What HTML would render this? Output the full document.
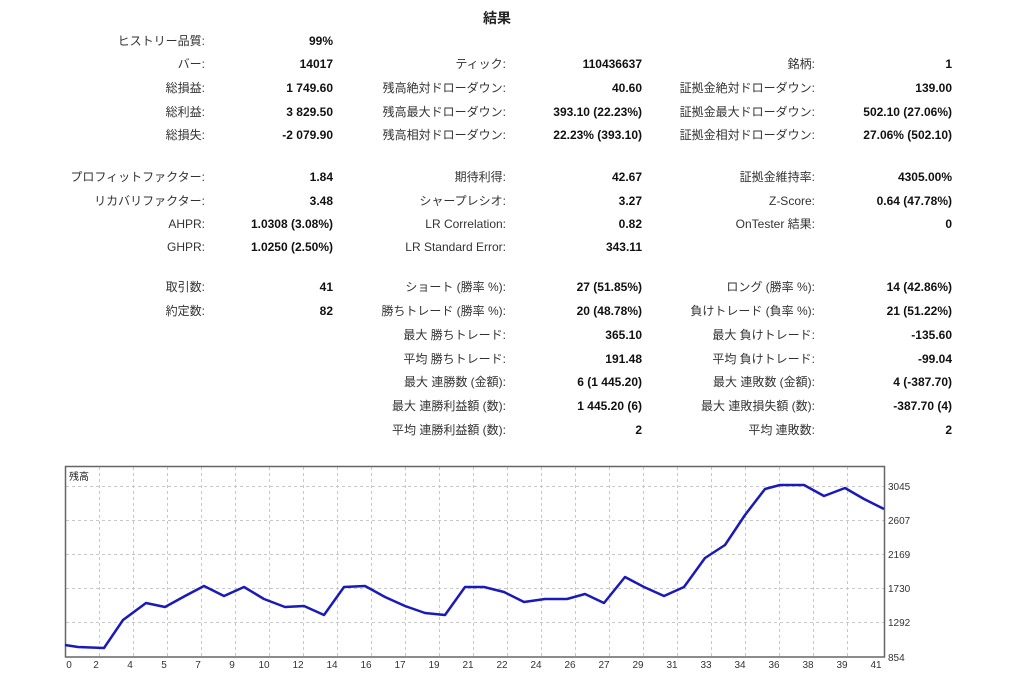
<!DOCTYPE html>
<html><head><meta charset="utf-8"><style>
body{margin:0;width:1024px;height:690px;background:#fff;position:relative;font-family:"Liberation Sans","Noto Sans CJK JP",sans-serif;font-size:12px;color:#222;overflow:hidden}
.l,.v{position:absolute;white-space:nowrap;line-height:14px;text-align:right}
.l{color:#333}
.v{font-weight:bold;color:#111}
.t{position:absolute;left:0;width:994px;text-align:center;top:8px;font-weight:bold;font-size:14px}
</style></head><body>
<div class="t">結果</div>
<!-- col1 labels right 205, values right 333 -->
<div class="l" style="right:819px;top:34px">ヒストリー品質:</div><div class="v" style="right:691px;top:34px">99%</div>
<div class="l" style="right:819px;top:57px">バー:</div><div class="v" style="right:691px;top:57px">14017</div>
<div class="l" style="right:819px;top:81px">総損益:</div><div class="v" style="right:691px;top:81px">1 749.60</div>
<div class="l" style="right:819px;top:105px">総利益:</div><div class="v" style="right:691px;top:105px">3 829.50</div>
<div class="l" style="right:819px;top:128px">総損失:</div><div class="v" style="right:691px;top:128px">-2 079.90</div>
<div class="l" style="right:819px;top:170px">プロフィットファクター:</div><div class="v" style="right:691px;top:170px">1.84</div>
<div class="l" style="right:819px;top:194px">リカバリファクター:</div><div class="v" style="right:691px;top:194px">3.48</div>
<div class="l" style="right:819px;top:217px">AHPR:</div><div class="v" style="right:691px;top:217px">1.0308 (3.08%)</div>
<div class="l" style="right:819px;top:240px">GHPR:</div><div class="v" style="right:691px;top:240px">1.0250 (2.50%)</div>
<div class="l" style="right:819px;top:280px">取引数:</div><div class="v" style="right:691px;top:280px">41</div>
<div class="l" style="right:819px;top:304px">約定数:</div><div class="v" style="right:691px;top:304px">82</div>
<!-- col2 labels right 506, values right 642 -->
<div class="l" style="right:518px;top:57px">ティック:</div><div class="v" style="right:382px;top:57px">110436637</div>
<div class="l" style="right:518px;top:81px">残高絶対ドローダウン:</div><div class="v" style="right:382px;top:81px">40.60</div>
<div class="l" style="right:518px;top:105px">残高最大ドローダウン:</div><div class="v" style="right:382px;top:105px">393.10 (22.23%)</div>
<div class="l" style="right:518px;top:128px">残高相対ドローダウン:</div><div class="v" style="right:382px;top:128px">22.23% (393.10)</div>
<div class="l" style="right:518px;top:170px">期待利得:</div><div class="v" style="right:382px;top:170px">42.67</div>
<div class="l" style="right:518px;top:194px">シャープレシオ:</div><div class="v" style="right:382px;top:194px">3.27</div>
<div class="l" style="right:518px;top:217px">LR Correlation:</div><div class="v" style="right:382px;top:217px">0.82</div>
<div class="l" style="right:518px;top:240px">LR Standard Error:</div><div class="v" style="right:382px;top:240px">343.11</div>
<div class="l" style="right:518px;top:280px">ショート (勝率 %):</div><div class="v" style="right:382px;top:280px">27 (51.85%)</div>
<div class="l" style="right:518px;top:304px">勝ちトレード (勝率 %):</div><div class="v" style="right:382px;top:304px">20 (48.78%)</div>
<div class="l" style="right:518px;top:328px">最大 勝ちトレード:</div><div class="v" style="right:382px;top:328px">365.10</div>
<div class="l" style="right:518px;top:352px">平均 勝ちトレード:</div><div class="v" style="right:382px;top:352px">191.48</div>
<div class="l" style="right:518px;top:375px">最大 連勝数 (金額):</div><div class="v" style="right:382px;top:375px">6 (1 445.20)</div>
<div class="l" style="right:518px;top:399px">最大 連勝利益額 (数):</div><div class="v" style="right:382px;top:399px">1 445.20 (6)</div>
<div class="l" style="right:518px;top:423px">平均 連勝利益額 (数):</div><div class="v" style="right:382px;top:423px">2</div>
<!-- col3 labels right 815, values right 952 -->
<div class="l" style="right:209px;top:57px">銘柄:</div><div class="v" style="right:72px;top:57px">1</div>
<div class="l" style="right:209px;top:81px">証拠金絶対ドローダウン:</div><div class="v" style="right:72px;top:81px">139.00</div>
<div class="l" style="right:209px;top:105px">証拠金最大ドローダウン:</div><div class="v" style="right:72px;top:105px">502.10 (27.06%)</div>
<div class="l" style="right:209px;top:128px">証拠金相対ドローダウン:</div><div class="v" style="right:72px;top:128px">27.06% (502.10)</div>
<div class="l" style="right:209px;top:170px">証拠金維持率:</div><div class="v" style="right:72px;top:170px">4305.00%</div>
<div class="l" style="right:209px;top:194px">Z-Score:</div><div class="v" style="right:72px;top:194px">0.64 (47.78%)</div>
<div class="l" style="right:209px;top:217px">OnTester 結果:</div><div class="v" style="right:72px;top:217px">0</div>
<div class="l" style="right:209px;top:280px">ロング (勝率 %):</div><div class="v" style="right:72px;top:280px">14 (42.86%)</div>
<div class="l" style="right:209px;top:304px">負けトレード (負率 %):</div><div class="v" style="right:72px;top:304px">21 (51.22%)</div>
<div class="l" style="right:209px;top:328px">最大 負けトレード:</div><div class="v" style="right:72px;top:328px">-135.60</div>
<div class="l" style="right:209px;top:352px">平均 負けトレード:</div><div class="v" style="right:72px;top:352px">-99.04</div>
<div class="l" style="right:209px;top:375px">最大 連敗数 (金額):</div><div class="v" style="right:72px;top:375px">4 (-387.70)</div>
<div class="l" style="right:209px;top:399px">最大 連敗損失額 (数):</div><div class="v" style="right:72px;top:399px">-387.70 (4)</div>
<div class="l" style="right:209px;top:423px">平均 連敗数:</div><div class="v" style="right:72px;top:423px">2</div>

<svg style="position:absolute;left:0;top:0" width="1024" height="690" font-family="Liberation Sans, Noto Sans CJK JP, sans-serif" font-size="10" fill="#222">
<g stroke="#c8c8c8" stroke-dasharray="3,3" stroke-width="1">
<line x1="99.5" y1="467" x2="99.5" y2="657"/><line x1="133.5" y1="467" x2="133.5" y2="657"/><line x1="167.5" y1="467" x2="167.5" y2="657"/><line x1="201.5" y1="467" x2="201.5" y2="657"/><line x1="235.5" y1="467" x2="235.5" y2="657"/><line x1="269.5" y1="467" x2="269.5" y2="657"/><line x1="303.5" y1="467" x2="303.5" y2="657"/><line x1="337.5" y1="467" x2="337.5" y2="657"/><line x1="371.5" y1="467" x2="371.5" y2="657"/><line x1="405.5" y1="467" x2="405.5" y2="657"/><line x1="439.5" y1="467" x2="439.5" y2="657"/><line x1="473.5" y1="467" x2="473.5" y2="657"/><line x1="507.5" y1="467" x2="507.5" y2="657"/><line x1="541.5" y1="467" x2="541.5" y2="657"/><line x1="575.5" y1="467" x2="575.5" y2="657"/><line x1="609.5" y1="467" x2="609.5" y2="657"/><line x1="643.5" y1="467" x2="643.5" y2="657"/><line x1="677.5" y1="467" x2="677.5" y2="657"/><line x1="711.5" y1="467" x2="711.5" y2="657"/><line x1="745.5" y1="467" x2="745.5" y2="657"/><line x1="779.5" y1="467" x2="779.5" y2="657"/><line x1="813.5" y1="467" x2="813.5" y2="657"/><line x1="847.5" y1="467" x2="847.5" y2="657"/>
<line x1="66" y1="486.5" x2="884" y2="486.5"/><line x1="66" y1="520.5" x2="884" y2="520.5"/><line x1="66" y1="554.5" x2="884" y2="554.5"/><line x1="66" y1="588.5" x2="884" y2="588.5"/><line x1="66" y1="622.5" x2="884" y2="622.5"/>
</g>
<rect x="65.5" y="466.5" width="819" height="190.5" fill="none" stroke="#666" stroke-width="1.5"/>
<text x="69" y="480" font-size="10">残高</text>
<polyline fill="none" stroke="#1a1ab8" stroke-width="2.5" stroke-linejoin="round" points="65,645 78,647 104,648 123,620 146,603 165,607 185,596 204,586 224,596 244,587 264,599 285,607 304,606 324,615 344,587 365,586 385,597 405,606 425,613 445,615 465,587 484,587 504,592 524,602 545,599 567,599 585,594 604,603 625,577 644,587 664,596 684,587 705,558 725,545 745,515 765,489 780,485 804,485 824,496 845,488 864,499 884,509"/>
<g font-size="10" fill="#333">
<text x="888" y="490">3045</text><text x="888" y="524">2607</text><text x="888" y="558">2169</text><text x="888" y="592">1730</text><text x="888" y="626">1292</text><text x="888" y="661">854</text>
</g>
<g font-size="10" fill="#333" text-anchor="middle">
<text x="69" y="668">0</text><text x="96" y="668">2</text><text x="130" y="668">4</text><text x="164" y="668">5</text><text x="198" y="668">7</text><text x="232" y="668">9</text><text x="264" y="668">10</text><text x="298" y="668">12</text><text x="332" y="668">14</text><text x="366" y="668">16</text><text x="400" y="668">17</text><text x="434" y="668">19</text><text x="468" y="668">21</text><text x="502" y="668">22</text><text x="536" y="668">24</text><text x="570" y="668">26</text><text x="604" y="668">27</text><text x="638" y="668">29</text><text x="672" y="668">31</text><text x="706" y="668">33</text><text x="740" y="668">34</text><text x="774" y="668">36</text><text x="808" y="668">38</text><text x="842" y="668">39</text><text x="876" y="668">41</text>
</g>
</svg>
</body></html>
